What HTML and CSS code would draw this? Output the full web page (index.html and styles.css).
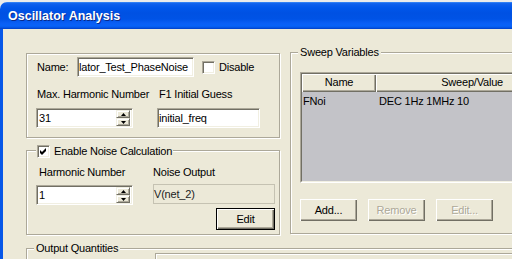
FILE: index.html
```html
<!DOCTYPE html>
<html>
<head>
<meta charset="utf-8">
<link rel="stylesheet" href="styles.css">
</head>
<body>
<div class="desk"></div>
<div class="window">
  <div class="titlebar"><span class="title">Oscillator Analysis</span></div>
  <div class="client">
    <div class="top-row">
      <div class="left-col">
        <div class="group name-group">
          <div class="row1">
            <span class="lbl-name">Name:</span>
            <div class="field name-field">lator_Test_PhaseNoise</div>
            <div class="check"></div>
            <span class="chk-label">Disable</span>
          </div>
          <div class="lbl-row">
            <span class="lbl-a">Max. Harmonic Number</span>
            <span>F1 Initial Guess</span>
          </div>
          <div class="fields-row">
            <div class="field spin">
              <span class="spin-text">31</span>
              <div class="spin-btns">
                <div class="spin-btn"><svg width="5" height="3" viewBox="0 0 5 3"><polygon points="2.5,0 5,3 0,3" fill="#000"/></svg></div>
                <div class="spin-btn"><svg width="5" height="3" viewBox="0 0 5 3"><polygon points="0,0 5,0 2.5,3" fill="#000"/></svg></div>
              </div>
            </div>
            <div class="field f1-field">initial_freq</div>
          </div>
        </div>
        <div class="group noise-group">
          <div class="legend chk-legend">
            <div class="check"><svg width="9" height="9" viewBox="0 0 9 9"><polygon points="1,3 3,5 7,1 7,4 3,8 1,6" fill="#000"/></svg></div>
            <span>Enable Noise Calculation</span>
          </div>
          <div class="lbl-row noise-lbls">
            <span class="lbl-b">Harmonic Number</span>
            <span>Noise Output</span>
          </div>
          <div class="noise-fields">
            <div class="field spin">
              <span class="spin-text">1</span>
              <div class="spin-btns">
                <div class="spin-btn"><svg width="5" height="3" viewBox="0 0 5 3"><polygon points="2.5,0 5,3 0,3" fill="#000"/></svg></div>
                <div class="spin-btn"><svg width="5" height="3" viewBox="0 0 5 3"><polygon points="0,0 5,0 2.5,3" fill="#000"/></svg></div>
              </div>
            </div>
            <div class="col2">
              <div class="ro-field">V(net_2)</div>
              <div class="btn default edit-btn">Edit</div>
            </div>
          </div>
        </div>
      </div>
      <div class="group sweep-group">
        <div class="legend">Sweep Variables</div>
        <div class="list">
          <div class="list-inner">
            <div class="list-head">
              <div class="hcell hc1">Name</div>
              <div class="hcell hc2">Sweep/Value</div>
            </div>
            <div class="list-row">
              <span class="c1">FNoi</span>
              <span class="c2">DEC 1Hz 1MHz 10</span>
            </div>
          </div>
        </div>
        <div class="btn-row">
          <div class="btn">Add...</div>
          <div class="btn disabled">Remove</div>
          <div class="btn disabled">Edit...</div>
        </div>
      </div>
    </div>
    <div class="group output-group">
      <div class="legend">Output Quantities</div>
      <div class="out-inner"></div>
    </div>
  </div>
</div>
</body>
</html>
```
FILE: styles.css
```css
* { box-sizing: border-box; }
html, body { margin: 0; padding: 0; }
body {
  width: 512px;
  height: 259px;
  overflow: hidden;
  background: #ebebeb;
  font-family: "Liberation Sans", Arial, sans-serif;
  font-size: 11px;
  letter-spacing: -0.2px;
  color: #000;
}
.desk { height: 2px; }
.window { width: 512px; height: 257px; overflow: hidden; }
.titlebar {
  height: 27px;
  border-top-left-radius: 7px;
  background: linear-gradient(to bottom,
    #4a97fb 0px, #1566ee 1px, #0a5cec 3px, #0056ea 6px,
    #0051e3 11px, #0053e6 17px, #0a5ef4 21px, #0863f8 24px,
    #0450de 26px, #003cc4 27px);
  padding: 8px 0 0 8px;
}
.title {
  display: block;
  color: #fff;
  font-weight: bold;
  font-size: 12.5px;
  letter-spacing: 0;
  line-height: 13px;
  text-shadow: 1px 1px 0 #0a2a8a;
}
.client {
  height: 230px;
  width: 600px;
  background: #ece9d8;
  border-left: 3px solid #0757e8;
  padding: 24px 0 0 23px;
}
.top-row { display: flex; align-items: flex-start; }
.left-col { width: 254px; display: flex; flex-direction: column; }

.group {
  position: relative;
  border: 1px solid #aca899;
  box-shadow: inset 1px 1px 0 #fff, 1px 1px 0 #fff;
}
.legend {
  position: absolute;
  top: -7px;
  left: 7px;
  padding: 0 2px;
  background: #ece9d8;
  line-height: 13px;
  white-space: nowrap;
}

.field {
  height: 20px;
  background: #fff;
  border: 1px solid;
  border-color: #aca899 #fff #fff #aca899;
  box-shadow: inset 1px 1px 0 #716f64, inset -1px -1px 0 #f1efe2;
  padding: 0 0 0 1px;
  line-height: 18px;
  white-space: nowrap;
  overflow: hidden;
}
.check {
  width: 13px;
  height: 13px;
  background: #fff;
  border: 1px solid;
  border-color: #aca899 #fff #fff #aca899;
  box-shadow: inset 1px 1px 0 #716f64, inset -1px -1px 0 #f1efe2;
  display: flex;
  align-items: center;
  justify-content: center;
  flex: none;
}

/* name group */
.name-group { height: 85px; padding: 3px 0 0 10px; }
.row1 { display: flex; align-items: center; height: 20px; }
.lbl-name { width: 40px; }
.name-field { width: 117px; }
.row1 .check { margin-left: 8px; }
.chk-label { margin-left: 4px; }
.lbl-row { display: flex; margin-top: 10px; line-height: 14px; white-space: nowrap; }
.lbl-a { width: 122px; }
.fields-row { display: flex; margin-top: 7px; }
.spin { display: flex; width: 97px; margin-left: -1px; padding: 1px 1px 1px 1px; line-height: 16px; }
.spin-text { flex: 1; padding-left: 1px; }
.spin-btns { display: flex; flex-direction: column; width: 14px; margin-right: 1px; }
.spin-btn {
  height: 8px;
  background: #ece9d8;
  border: 1px solid;
  border-color: #f1efe2 #716f64 #716f64 #f1efe2;
  box-shadow: inset 1px 1px 0 #fff, inset -1px -1px 0 #aca899;
  display: flex;
  align-items: center;
  justify-content: center;
}
.spin-btn svg { display: block; }
.f1-field { width: 103px; margin-left: 24px; }

/* noise group */
.noise-group { margin-top: 12px; height: 85px; padding: 0; }
.chk-legend { display: flex; align-items: center; gap: 4px; left: 9px; top: -6px; padding: 0 1px; }
.noise-lbls { margin-top: 14px; padding-left: 12px; }
.lbl-b { width: 114px; }
.noise-fields { display: flex; align-items: flex-start; margin-top: 6px; padding-left: 9px; }
.noise-fields .spin { margin-left: 0; }
.col2 { display: flex; flex-direction: column; width: 122px; margin-left: 20px; margin-top: -1px; }
.ro-field {
  height: 20px;
  border: 1px solid #c5c2b2;
  color: #222;
  line-height: 18px;
  white-space: nowrap;
}
.edit-btn { width: 59px; margin-left: auto; margin-top: 4px; }

.btn {
  height: 22px;
  background: #ece9d8;
  box-shadow: inset 1px 1px 0 #fff, inset -1px -1px 0 #716f64, inset -2px -2px 0 #aca899;
  display: flex;
  align-items: center;
  justify-content: center;
  white-space: nowrap;
}
.btn.default {
  border: 1px solid #000;
}
.btn.disabled { color: #aca899; text-shadow: 1px 1px 0 #fff; }

/* sweep group */
.sweep-group {
  margin-left: 10px;
  margin-top: -1px;
  width: 240px;
  height: 182px;
  padding: 19px 0 0 9px;
}
.list {
  width: 220px;
  height: 111px;
  border: 1px solid;
  border-color: #aca899 #fff #fff #aca899;
}
.list-inner {
  height: 100%;
  border: 1px solid;
  border-color: #716f64 #f1efe2 #f1efe2 #716f64;
  background: #c3c3c8;
}
.list-head { display: flex; height: 18px; background: #ece9d8; }
.hcell {
  height: 18px;
  line-height: 17px;
  box-shadow: inset 1px 1px 0 #fff, inset -1px -1px 0 #716f64, inset -2px -2px 0 #aca899;
}
.hc1 { width: 74px; text-align: center; }
.hc2 { width: 140px; text-align: right; padding-right: 13px; }
.list-row { display: flex; line-height: 16px; padding-top: 1px; }
.c1 { width: 74px; padding-left: 1px; }
.c2 { padding-left: 3px; }
.btn-row { display: flex; gap: 11px; margin-top: 16px; }
.btn-row .btn { width: 57px; }

/* output group */
.output-group {
  margin-top: 13px;
  width: 560px;
  height: 40px;
  padding: 4px 0 0 128px;
}
.out-inner {
  width: 400px;
  height: 30px;
  border: 1px solid #aca899;
  box-shadow: inset 1px 1px 0 #fff, 1px 1px 0 #fff;
}
```
